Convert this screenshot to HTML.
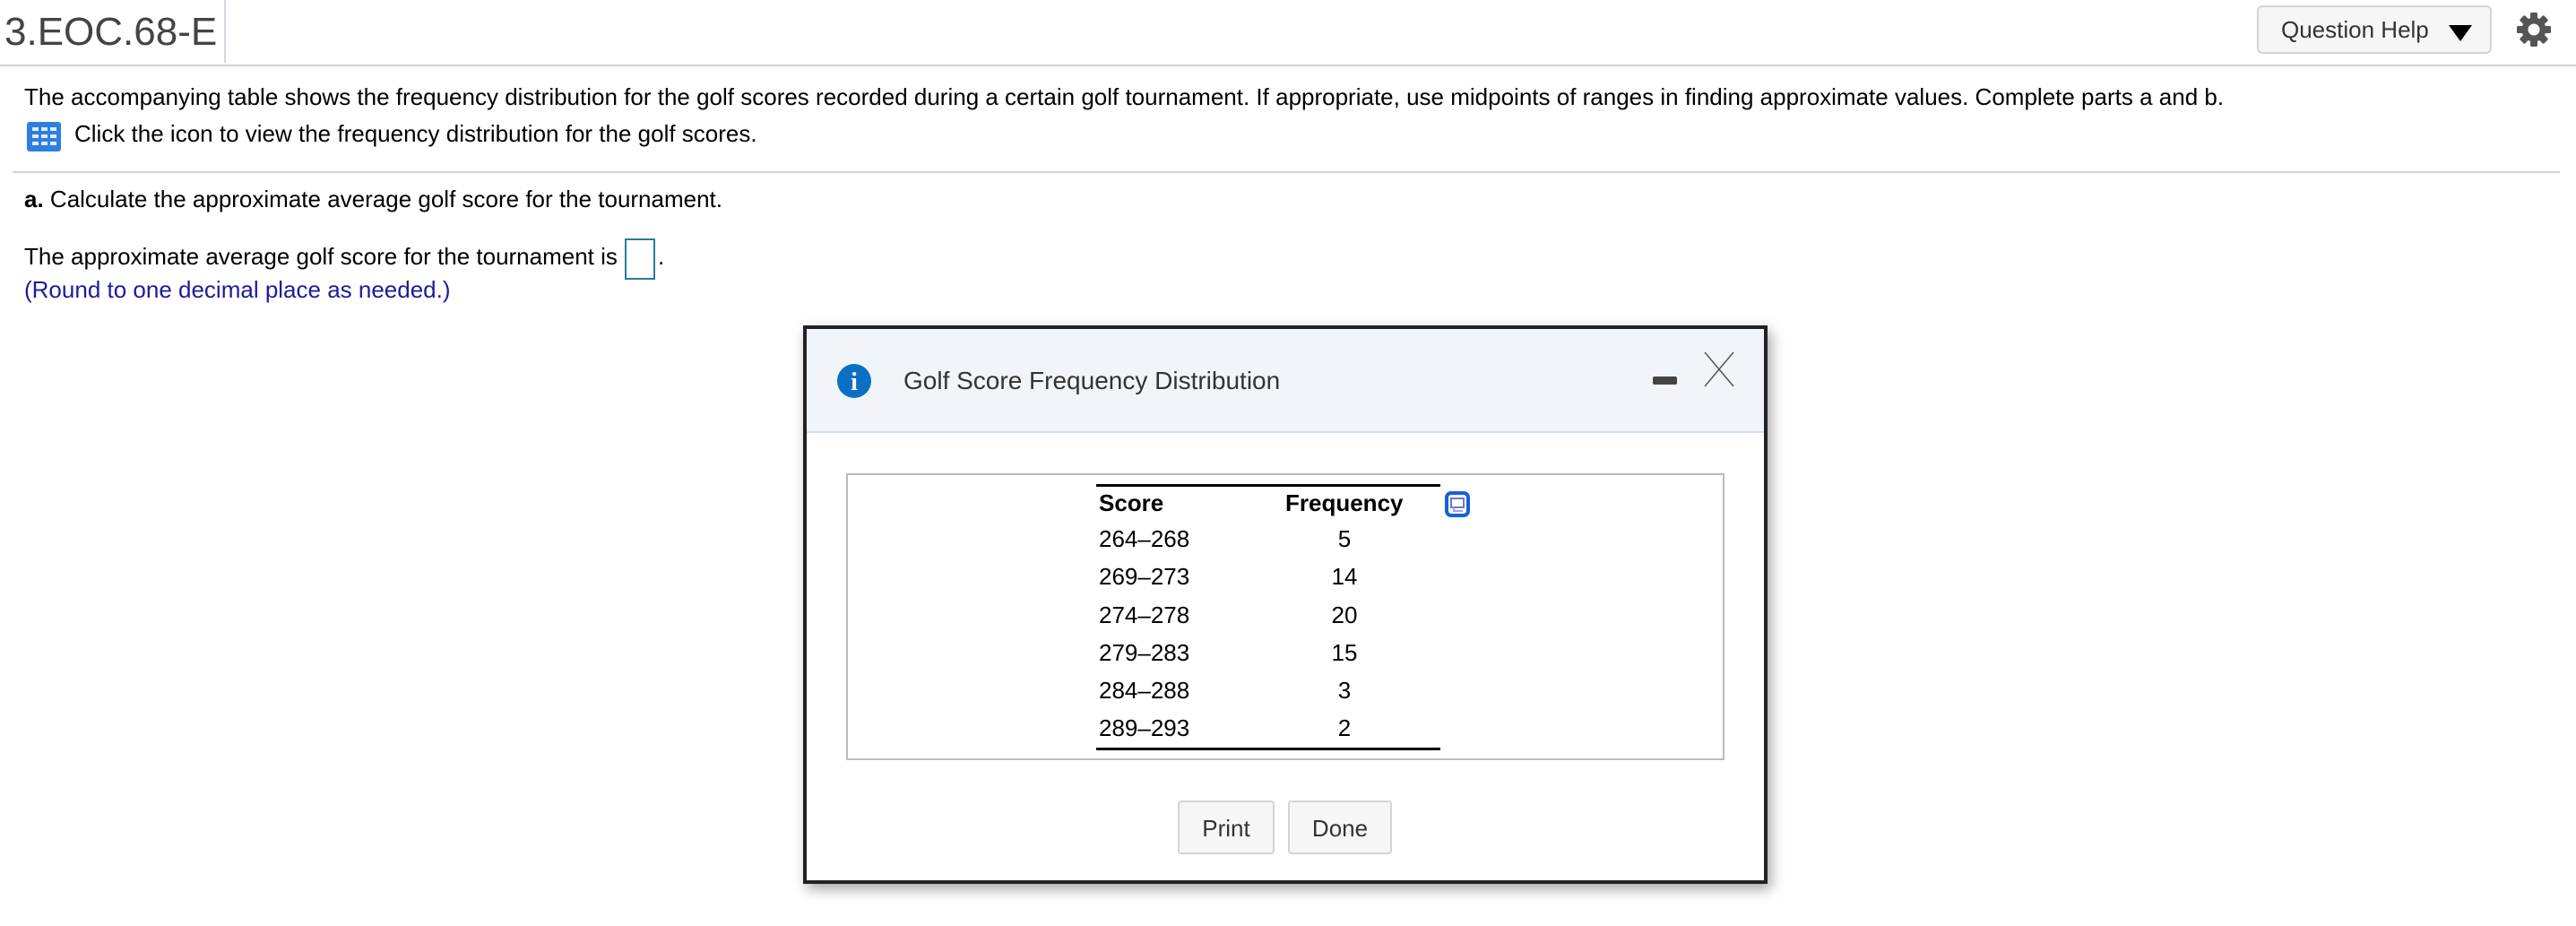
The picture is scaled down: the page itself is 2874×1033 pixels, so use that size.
<!DOCTYPE html>
<html><head><meta charset="utf-8"><style>
body{margin:0;width:2874px;height:1033px;background:#fff;position:relative;overflow:hidden;font-family:"Liberation Sans",Arial,sans-serif;}
.a{position:absolute;line-height:1;white-space:nowrap;}
.t{font-size:26px;color:#000;}
</style></head><body>
<div class="a" style="left:5px;top:14px;font-size:44px;color:#444;">3.EOC.68-E</div>
<div class="a" style="left:250px;top:0;width:2px;height:70px;background:#d5d8e0;"></div>
<div class="a" style="left:0;top:72px;width:2874px;height:2px;background:#cfd3de;"></div>
<div class="a" style="left:2518px;top:6px;width:262px;height:54px;border:2px solid #d4d4d4;border-radius:6px;background:#f6f6f6;box-sizing:border-box;"></div>
<div class="a" style="left:2545px;top:20px;font-size:26px;color:#333;">Question Help</div>
<svg class="a" style="left:2730px;top:24px" width="30" height="24"><polygon points="2,4 28,4 15,22" fill="#000"/></svg>
<svg class="a" style="left:2806px;top:12px" width="42" height="42" viewBox="-21 -21 42 42">
<g fill="#555">
<circle r="13.5"/>
<g id="tt"><rect x="-4" y="-19" width="8" height="9" rx="1.5"/></g>
<use href="#tt" transform="rotate(45)"/><use href="#tt" transform="rotate(90)"/><use href="#tt" transform="rotate(135)"/><use href="#tt" transform="rotate(180)"/><use href="#tt" transform="rotate(225)"/><use href="#tt" transform="rotate(270)"/><use href="#tt" transform="rotate(315)"/>
</g><circle r="6.5" fill="#fff"/></svg>

<div class="a t" style="left:27px;top:95px;">The accompanying table shows the frequency distribution for the golf scores recorded during a certain golf tournament. If appropriate, use midpoints of ranges in finding approximate values. Complete parts a and b.</div>
<svg class="a" style="left:30px;top:136px" width="38" height="33"><rect x="0" y="0" width="38" height="33" rx="3" fill="#2f7fe0"/>
<g fill="#fff" opacity="0.85"><rect x="6" y="6" width="7" height="4"/><rect x="16" y="6" width="7" height="4"/><rect x="26" y="6" width="7" height="4"/><rect x="6" y="14" width="7" height="4"/><rect x="16" y="14" width="7" height="4"/><rect x="26" y="14" width="7" height="4"/><rect x="6" y="22" width="7" height="4"/><rect x="16" y="22" width="7" height="4"/><rect x="26" y="22" width="7" height="4"/></g></svg>
<div class="a t" style="left:83px;top:136px;">Click the icon to view the frequency distribution for the golf scores.</div>
<div class="a" style="left:14px;top:191px;width:2842px;height:2px;background:#cfd3de;"></div>
<div class="a t" style="left:27px;top:209px;"><b>a.</b> Calculate the approximate average golf score for the tournament.</div>
<div class="a t" style="left:27px;top:273px;">The approximate average golf score for the tournament is</div>
<div class="a" style="left:697px;top:266px;width:34px;height:46px;border:2px solid #2b7a9a;box-sizing:border-box;"></div>
<div class="a t" style="left:734px;top:273px;">.</div>
<div class="a t" style="left:27px;top:310px;color:#1c1c9a;">(Round to one decimal place as needed.)</div>

<div class="a" style="left:896px;top:363px;width:1076px;height:623px;border:4px solid #222;box-sizing:border-box;background:#fff;box-shadow:4px 6px 14px rgba(0,0,0,0.35);"></div>
<div class="a" style="left:900px;top:367px;width:1068px;height:114px;background:#f1f5f9;border-bottom:2px solid #cfe0f0;"></div>
<svg class="a" style="left:934px;top:406px" width="38" height="38"><circle cx="19" cy="19" r="19" fill="#0b6fc5"/><text x="19" y="29" font-family="Liberation Serif,serif" font-weight="bold" font-size="28" fill="#fff" text-anchor="middle">i</text></svg>
<div class="a" style="left:1008px;top:411px;font-size:28px;color:#333;">Golf Score Frequency Distribution</div>
<div class="a" style="left:1844px;top:420px;width:27px;height:9px;background:#444;border-radius:2px;"></div>
<svg class="a" style="left:1900px;top:391px" width="36" height="42"><path d="M2 2 L34 40 M34 2 L2 40" stroke="#555" stroke-width="1.5" fill="none"/></svg>

<div class="a" style="left:944px;top:528px;width:980px;height:320px;border:2px solid #bbb;box-sizing:border-box;"></div>
<div class="a" style="left:1223px;top:540px;width:384px;height:3px;background:#000;"></div>
<div class="a" style="left:1223px;top:834px;width:384px;height:3px;background:#000;"></div>
<div class="a t" style="left:1226px;top:548px;font-weight:bold;">Score</div>
<div class="a t" style="left:1434px;top:548px;font-weight:bold;">Frequency</div>
<svg class="a" style="left:1612px;top:548px" width="28" height="29"><rect x="2" y="2" width="24" height="25" rx="5" fill="#fff" stroke="#1760d8" stroke-width="4"/><rect x="7" y="8" width="14" height="10" fill="none" stroke="#6a7bd0" stroke-width="2"/><path d="M10 18 V22 H20" stroke="#9aa6e0" stroke-width="2" fill="none"/></svg>
<div class="a t" style="left:1226px;top:588px;">264–268</div><div class="a t" style="left:1440px;width:120px;text-align:center;top:588px;">5</div>
<div class="a t" style="left:1226px;top:630px;">269–273</div><div class="a t" style="left:1440px;width:120px;text-align:center;top:630px;">14</div>
<div class="a t" style="left:1226px;top:673px;">274–278</div><div class="a t" style="left:1440px;width:120px;text-align:center;top:673px;">20</div>
<div class="a t" style="left:1226px;top:715px;">279–283</div><div class="a t" style="left:1440px;width:120px;text-align:center;top:715px;">15</div>
<div class="a t" style="left:1226px;top:757px;">284–288</div><div class="a t" style="left:1440px;width:120px;text-align:center;top:757px;">3</div>
<div class="a t" style="left:1226px;top:799px;">289–293</div><div class="a t" style="left:1440px;width:120px;text-align:center;top:799px;">2</div>

<div class="a" style="left:1314px;top:893px;width:108px;height:60px;border:2px solid #d4d4d4;border-radius:4px;background:#f6f6f6;box-sizing:border-box;"></div>
<div class="a t" style="left:1314px;width:108px;text-align:center;top:911px;color:#333;">Print</div>
<div class="a" style="left:1437px;top:893px;width:116px;height:60px;border:2px solid #d4d4d4;border-radius:4px;background:#f6f6f6;box-sizing:border-box;"></div>
<div class="a t" style="left:1437px;width:116px;text-align:center;top:911px;color:#333;">Done</div>
</body></html>
